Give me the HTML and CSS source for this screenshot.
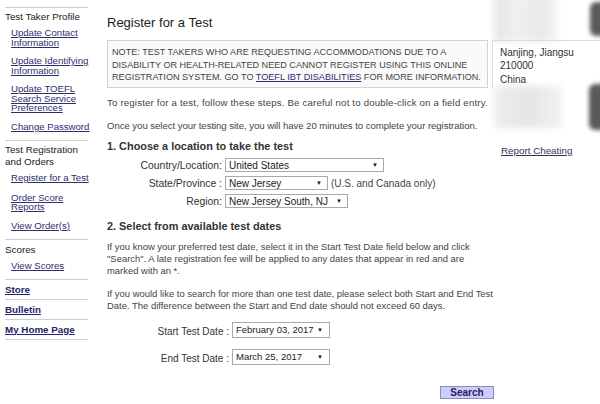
FILE: index.html
```html
<!DOCTYPE html>
<html>
<head>
<meta charset="utf-8">
<title>Register for a Test</title>
<link rel="stylesheet" href="styles.css">
</head>
<body>
<div class="page">
  <nav class="sidebar">
    <div class="sec">
      <div class="sec-title">Test Taker Profile</div>
      <a class="sub first" href="#">Update Contact<br>Information</a>
      <a class="sub" href="#">Update Identifying<br>Information</a>
      <a class="sub" href="#">Update TOEFL<br>Search Service<br>Preferences</a>
      <a class="sub" href="#">Change Password</a>
    </div>
    <div class="sec">
      <div class="sec-title">Test Registration<br>and Orders</div>
      <a class="sub first" href="#">Register for a Test</a>
      <a class="sub gap-lg" href="#">Order Score<br>Reports</a>
      <a class="sub" href="#">View Order(s)</a>
    </div>
    <div class="sec sec-scores">
      <div class="sec-title">Scores</div>
      <a class="sub first" href="#">View Scores</a>
    </div>
    <div class="sec sec-link"><a class="top-link" href="#">Store</a></div>
    <div class="sec sec-link"><a class="top-link" href="#">Bulletin</a></div>
    <div class="sec sec-link last"><a class="top-link" href="#">My Home Page</a></div>
  </nav>

  <main class="main">
    <h1 class="title">Register for a Test</h1>
    <div class="note">NOTE: TEST TAKERS WHO ARE REQUESTING ACCOMMODATIONS DUE TO A<br>DISABILITY OR HEALTH-RELATED NEED CANNOT REGISTER USING THIS ONLINE<br>REGISTRATION SYSTEM. GO TO <a href="#">TOEFL IBT DISABILITIES</a> FOR MORE INFORMATION.</div>
    <p class="text p-first">To register for a test, follow these steps. Be careful not to double-click on a field entry.</p>
    <p class="text p-second">Once you select your testing site, you will have 20 minutes to complete your registration.</p>

    <h2 class="step step-one">1. Choose a location to take the test</h2>
    <div class="form-grid">
      <span class="label">Country/Location:</span>
      <div class="field"><div class="select w-country"><span>United States</span><span class="arrow">▼</span></div></div>
      <span class="label">State/Province :</span>
      <div class="field"><div class="select w-state"><span>New Jersey</span><span class="arrow">▼</span></div><span class="hint">(U.S. and Canada only)</span></div>
      <span class="label">Region:</span>
      <div class="field"><div class="select w-region"><span>New Jersey South, NJ</span><span class="arrow">▼</span></div></div>
    </div>

    <h2 class="step step-two">2. Select from available test dates</h2>
    <p class="text p-dates">If you know your preferred test date, select it in the Start Test Date field below and click<br>"Search". A late registration fee will be applied to any dates that appear in red and are<br>marked with an *.</p>
    <p class="text p-range">If you would like to search for more than one test date, please select both Start and End Test<br>Date. The difference between the Start and End date should not exceed 60 days.</p>

    <div class="date-grid">
      <span class="label date-label">Start Test Date :</span>
      <div class="select date-select"><span>February 03, 2017</span><span class="arrow">▼</span></div>
      <span class="label date-label">End Test Date :</span>
      <div class="select date-select"><span>March 25, 2017</span><span class="arrow">▼</span></div>
    </div>

    <div class="actions"><button class="search-btn" type="button">Search</button></div>
  </main>

  <aside class="aside">
    <div class="blur blur-a"></div>
    <div class="blur blur-b"></div>
    <div class="blur dark dark-a"></div>
    <div class="blur dark dark-b"></div>
    <div class="address">
      <div>Nanjing, Jiangsu</div>
      <div>210000</div>
      <div class="country">China</div>
    </div>
    <a class="report" href="#">Report Cheating</a>
  </aside>
</div>
</body>
</html>
```

FILE: styles.css
```css
* { box-sizing: border-box; }

body {
  margin: 0;
  font-family: "Liberation Sans", Arial, sans-serif;
  color: #444;
  background: #fff;
  overflow: hidden;
}

.page {
  display: flex;
  width: 600px;
  height: 404px;
}

/* ---------- sidebar ---------- */
.sidebar {
  flex: 0 0 83px;
  min-width: 0;
  margin-left: 5px;
  padding-top: 7px;
}

.sec {
  border-top: 1px solid #cfcfcf;
  padding: 3px 0 9px;
}

.sec-title {
  font-size: 9.8px;
  line-height: 12px;
  color: #222;
}

.sub {
  display: block;
  margin: 9px 0 0 6px;
  font-size: 9.6px;
  line-height: 9.5px;
  color: #2e2e6e;
  text-decoration: underline;
  white-space: nowrap;
}

.sub.first { margin-top: 5px; }
.sub.gap-lg { margin-top: 10px; }

.sec-scores { padding: 4px 0 8px; }

.sec-link { padding: 4px 0 3px; }
.sec-link.last { border-bottom: 1px solid #cfcfcf; }

.top-link {
  display: block;
  font-size: 9.8px;
  line-height: 12px;
  font-weight: bold;
  color: #24246a;
  text-decoration: underline;
}

/* ---------- main ---------- */
.main {
  flex: 0 0 381px;
  min-width: 0;
  margin-left: 19px;
  font-size: 9.6px;
}

.title {
  margin: 15px 0 0;
  font-size: 13px;
  line-height: 16px;
  font-weight: normal;
  color: #222;
}

.note {
  margin-top: 9px;
  height: 48px;
  padding: 5px 0 0 4px;
  border: 1px solid #d2d2d2;
  background: #fafafa;
  font-size: 9.1px;
  line-height: 12.5px;
  color: #444;
  white-space: nowrap;
}

.note a { color: #2e2e6e; text-decoration: underline; }

.text {
  margin: 0;
  line-height: 12px;
  color: #444;
  white-space: nowrap;
}

.p-first { margin-top: 9px; letter-spacing: 0.2px; }
.p-second { margin-top: 11px; letter-spacing: -0.05px; }
.p-dates { margin-top: 8px; font-size: 9.45px; }
.p-range { margin-top: 11px; font-size: 9.45px; }

.step {
  margin: 0;
  font-size: 10.9px;
  line-height: 14px;
  font-weight: bold;
  color: #333;
}

.step-one { margin-top: 7px; }
.step-two { margin-top: 11px; }

.form-grid {
  display: grid;
  grid-template-columns: 115px auto;
  column-gap: 3px;
  row-gap: 4px;
  margin-top: 5px;
  align-items: center;
}

.label {
  text-align: right;
  font-size: 10px;
  color: #333;
  white-space: nowrap;
}

.form-grid .label { font-size: 10.4px; }

.field {
  display: flex;
  align-items: center;
  gap: 3px;
}

.select {
  display: flex;
  align-items: center;
  justify-content: space-between;
  height: 14px;
  padding: 0 5px 0 3px;
  border: 1px solid #a9a9a9;
  background: #fff;
  font-size: 10px;
  color: #222;
  white-space: nowrap;
}

.arrow {
  font-size: 6px;
  color: #111;
}

.w-country { width: 159px; }
.w-state { width: 103px; }
.w-region { width: 123px; }

.hint { font-size: 10px; color: #444; }

.date-grid {
  display: grid;
  grid-template-columns: 122px 98px;
  column-gap: 3px;
  row-gap: 11px;
  margin-top: 10px;
  align-items: end;
}

.date-select { height: 16px; padding: 0 6px 1px 3px; font-size: 9.5px; }
.date-label { line-height: 12px; }

.actions {
  margin-top: 21px;
  padding-left: 333px;
}

.search-btn {
  display: block;
  width: 54px;
  height: 13px;
  padding: 0;
  border: 1px solid #8c8cb0;
  background: #ccccff;
  font-family: "Liberation Sans", Arial, sans-serif;
  font-size: 10px;
  line-height: 11px;
  font-weight: bold;
  color: #22225a;
}

/* ---------- aside ---------- */
.aside {
  position: relative;
  flex: 1;
  min-width: 0;
  margin-left: 4px;
}

.address {
  position: relative;
  margin-top: 40px;
  height: 48px;
  padding: 6px 0 0 7px;
  border-left: 1px solid #dcdcdc;
  border-top: 1px solid #dcdcdc;
  font-size: 10px;
  line-height: 12.5px;
  color: #333;
  white-space: nowrap;
}

.address .country { margin-top: 2px; }

.report {
  display: block;
  margin: 57px 0 0 9px;
  font-size: 9.8px;
  line-height: 12px;
  color: #333355;
  text-decoration: underline;
  position: relative;
}

.blur {
  position: absolute;
  filter: blur(3px);
}

.blur-a {
  left: 2px; top: -4px; width: 64px; height: 46px;
  background: linear-gradient(90deg, #e6e6e6 0%, #f0f0f0 40%, #e8e8e8 70%, #f4f4f4 100%);
}

.blur-b {
  left: 2px; top: 86px; width: 68px; height: 42px;
  background: linear-gradient(90deg, #eeeeee 0%, #e5e5e5 50%, #f2f2f2 100%);
}

.dark {
  background: #5a5a5a;
  border-radius: 6px 0 0 6px;
  filter: blur(2px);
}

.dark-a { left: 98px; top: 2px; width: 14px; height: 34px; }
.dark-b { left: 97px; top: 84px; width: 16px; height: 46px; }
```
